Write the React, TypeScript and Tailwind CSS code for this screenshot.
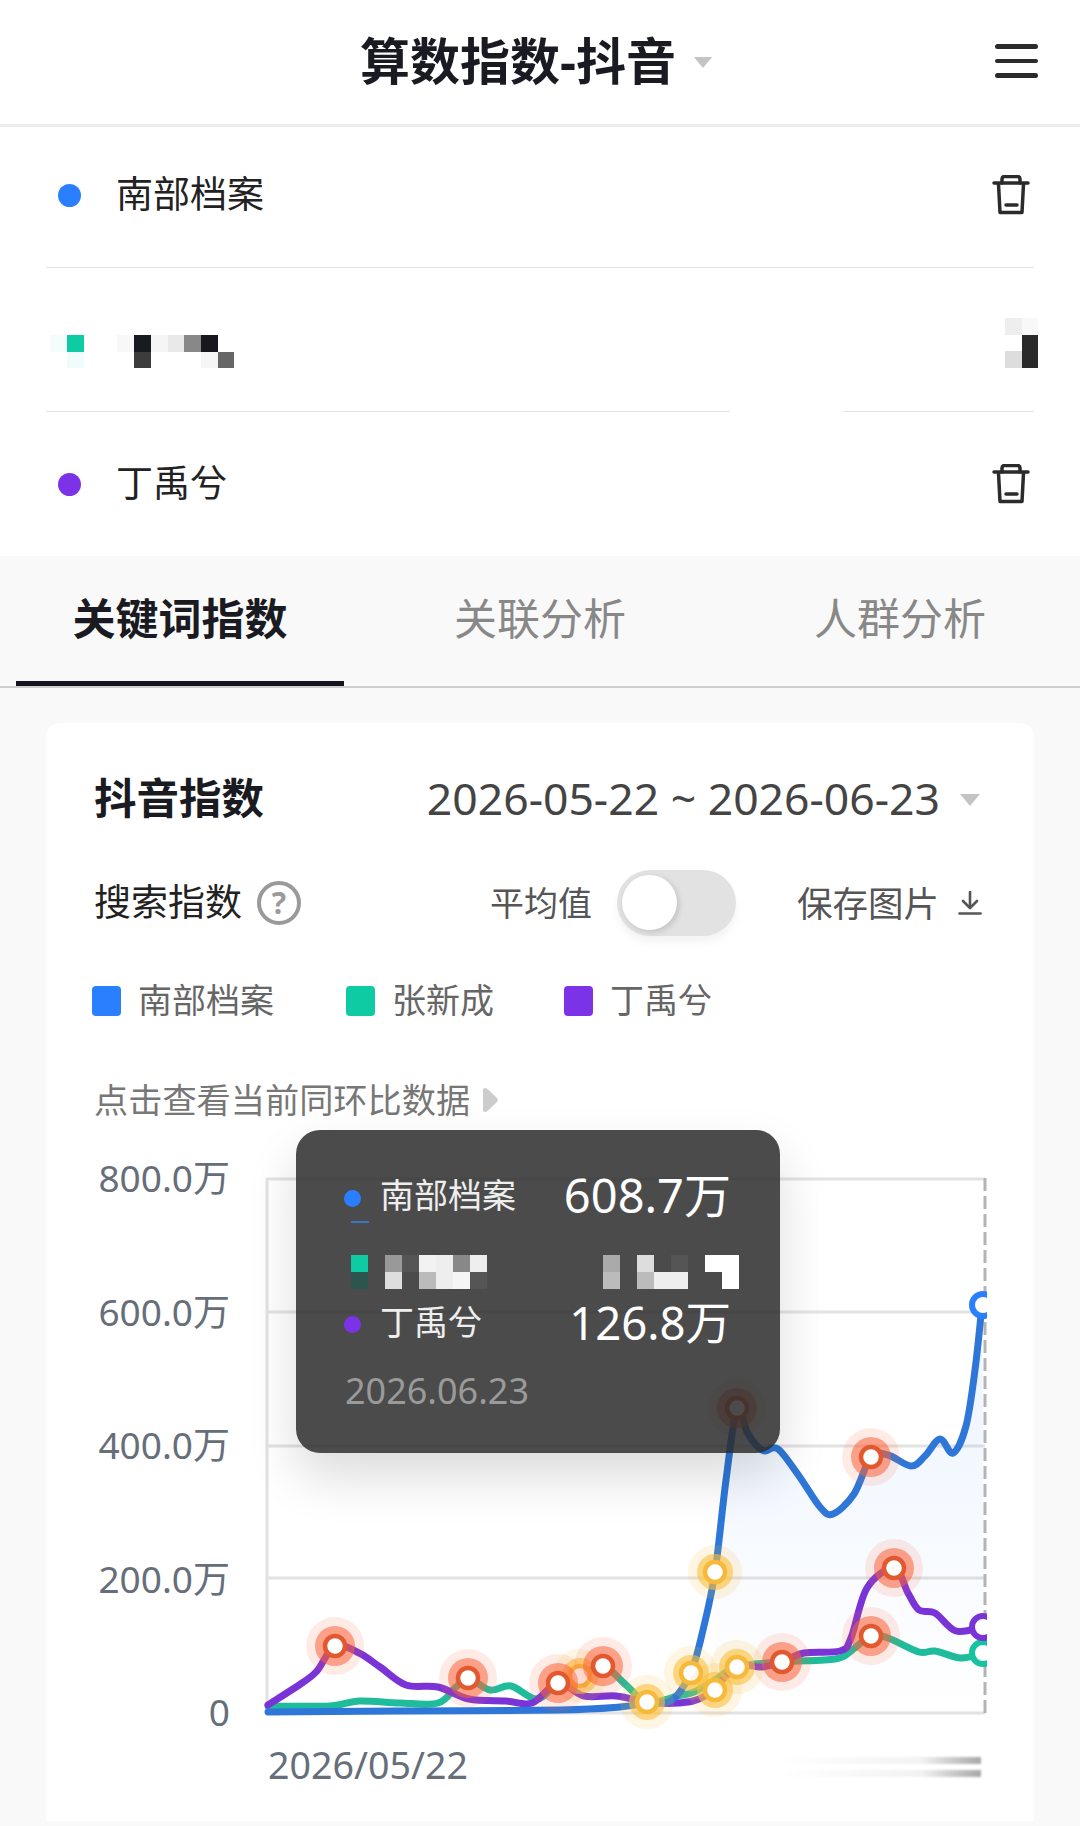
type Pt = [number, number];

const blue: Pt[] = [[268,1712],[400,1711],[560,1710],[620,1707],[647,1703],[672,1700],[691,1672],[703,1630],[715,1572],[726,1480],[737,1408],[747,1432],[757,1446],[765,1451],[778,1449],[799,1476],[820,1507],[833,1514],[854,1494],[871,1457],[888,1455],[911,1466],[925,1456],[940,1439],[953,1453],[966,1426],[975,1370],[982,1305]];
const teal: Pt[] = [[268,1706],[330,1706],[359,1701],[400,1703],[438,1703],[456,1687],[468,1678],[490,1690],[511,1686],[537,1699],[558,1683],[580,1676],[603,1666],[626,1685],[647,1702],[678,1696],[694,1692],[715,1680],[737,1667],[782,1662],[835,1659],[851,1651],[871,1636],[888,1638],[919,1652],[935,1651],[961,1658],[982,1653]];
const purple: Pt[] = [[268,1705],[302,1683],[317,1671],[335,1646],[359,1653],[380,1667],[406,1685],[438,1687],[469,1699],[506,1701],[532,1703],[558,1683],[584,1696],[616,1696],[647,1702],[678,1703],[705,1696],[737,1667],[762,1667],[782,1662],[804,1653],[840,1651],[851,1638],[867,1588],[894,1568],[908,1593],[919,1610],[935,1613],[956,1631],[982,1627]];

const orangeDots: Pt[] = [[335,1646],[468,1678],[558,1683],[603,1666],[782,1662],[871,1636],[894,1568],[871,1457],[737,1408]];
const yellowDots: Pt[] = [[580,1676],[647,1702],[691,1673],[715,1690],[737,1667],[715,1572]];

// catmull-rom through the points so the lines stay smooth
const smooth = (pts: Pt[]) => {
  let d = `M${pts[0][0]} ${pts[0][1]}`;
  for (let i = 0; i < pts.length - 1; i++) {
    const p0 = pts[i - 1] || pts[i];
    const p1 = pts[i];
    const p2 = pts[i + 1];
    const p3 = pts[i + 2] || p2;
    const c1x = p1[0] + (p2[0] - p0[0]) / 6;
    const c1y = p1[1] + (p2[1] - p0[1]) / 6;
    const c2x = p2[0] - (p3[0] - p1[0]) / 6;
    const c2y = p2[1] - (p3[1] - p1[1]) / 6;
    d += ` C${c1x} ${c1y} ${c2x} ${c2y} ${p2[0]} ${p2[1]}`;
  }
  return d;
};

const Caret = ({ className }: { className: string }) => (
  <svg viewBox="0 0 20 12" className={className}>
    <path d="M0 0H20L10 12Z" fill="#c4c4c4" />
  </svg>
);

const Trash = () => (
  <svg viewBox="0 0 38 40" className="w-[38px] h-[40px]" fill="none" stroke="#2b2b2b" strokeWidth="3.5" strokeLinecap="round" strokeLinejoin="round">
    <path d="M2 8H36" />
    <path d="M10 8V4C10 2.5 11 1.5 12.5 1.5H25.5C27 1.5 28 2.5 28 4V8" />
    <path d="M6.5 9L8 37.5H30L31.5 9" />
    <path d="M14 30H25" />
  </svg>
);

const Dot = ({ className }: { className: string }) => <span className={`block w-[23px] h-[23px] rounded-full ${className}`} />;

const Swatch = ({ color, label, className }: { color: string; label: string; className: string }) => (
  <div className={`flex items-center gap-[17px] ${className}`}>
    <span className={`block w-[29px] h-[30px] rounded-[4px] ${color}`} />
    <span className="text-[34px] leading-[40px] mb-[2px] text-[#666]">{label}</span>
  </div>
);

const Mosaic = ({ cells, size, className }: { cells: [number, number, string][]; size: number; className: string }) => (
  <svg className={className} shapeRendering="crispEdges">
    {cells.map(([c, r, fill], i) => (
      <rect key={i} x={c * size} y={r * size} width={size} height={size} fill={fill} />
    ))}
  </svg>
);

const Marker = ({ x, y, tone }: { x: number; y: number; tone: "orange" | "yellow" }) => {
  const orange = tone === "orange";
  return (
    <g>
      <circle cx={x} cy={y} r={orange ? 29 : 27} fill={orange ? "#f9633a" : "#fbbf3c"} fillOpacity={orange ? 0.13 : 0.15} />
      <circle cx={x} cy={y} r={orange ? 20 : 18} fill={orange ? "#f9633a" : "#fbbf3c"} fillOpacity={orange ? 0.55 : 0.6} />
      <circle cx={x} cy={y} r="10" fill="#fff" stroke={orange ? "#e2592f" : "#f6b93b"} strokeWidth="4.5" />
    </g>
  );
};

const Chart = () => (
  <svg viewBox="260 1150 730 590" className="w-[730px] h-[590px]" fill="none">
    <defs>
      <linearGradient id="area" x1="0" y1="0" x2="0" y2="1">
        <stop offset="0" stopColor="#2a7fff" stopOpacity="0.09" />
        <stop offset="1" stopColor="#2a7fff" stopOpacity="0" />
      </linearGradient>
      <clipPath id="plot">
        <rect x="260" y="1150" width="727" height="590" />
      </clipPath>
    </defs>
    {[1179, 1312, 1446, 1578, 1713].map((y) => (
      <path key={y} d={`M267 ${y}H985`} stroke="#e2e2e2" strokeWidth="3" />
    ))}
    <path d="M267 1178V1714" stroke="#e2e2e2" strokeWidth="3" />
    <path d="M985 1178V1714" stroke="#b4b4b4" strokeWidth="3" strokeDasharray="13 5" />
    <path d={`${smooth(blue.slice(8))} L985 1713 L715 1713 Z`} fill="url(#area)" />
    <g clipPath="url(#plot)" strokeWidth="7" strokeLinecap="round" strokeLinejoin="round">
      <path d={smooth(teal)} stroke="#1fbc9c" />
      <path d={smooth(purple)} stroke="#7a33d6" />
      <path d={smooth(blue)} stroke="#2e77d8" />
      {yellowDots.slice(0, 1).map(([x, y]) => <Marker key={x} x={x} y={y} tone="yellow" />)}
      {orangeDots.map(([x, y]) => <Marker key={`${x}-${y}`} x={x} y={y} tone="orange" />)}
      {yellowDots.slice(1).map(([x, y]) => <Marker key={`${x}-${y}`} x={x} y={y} tone="yellow" />)}
      <circle cx="983" cy="1305" r="11" fill="#fff" stroke="#2a7fff" strokeWidth="6" />
      <circle cx="983" cy="1653" r="11" fill="#fff" stroke="#15c39f" strokeWidth="6" />
      <circle cx="983" cy="1627" r="11" fill="#fff" stroke="#7a33d6" strokeWidth="6" />
    </g>
  </svg>
);

export default function App() {
  return (
    <div className="w-[1080px] h-[1826px] overflow-hidden bg-[#f9f9f9] font-['Noto_Sans','Noto_Sans_CJK_SC',sans-serif]">
      <div className="bg-white">
        <header className="h-[127px] border-b-[3px] border-[#ececec] flex items-center pl-[360px] pr-[42px]">
          <h1 className="text-[50px] leading-[60px] mb-[2px] font-bold text-[#1a1a22] whitespace-nowrap">算数指数-抖音</h1>
          <Caret className="w-[20px] h-[11px] ml-[17px]" />
          <div className="ml-auto flex flex-col gap-[10px] mb-[2px]">
            <span className="block w-[43px] h-[4.5px] rounded-full bg-[#2b2b2b]" />
            <span className="block w-[43px] h-[4.5px] rounded-full bg-[#2b2b2b]" />
            <span className="block w-[43px] h-[4.5px] rounded-full bg-[#2b2b2b]" />
          </div>
        </header>
        <div className="h-[140px] pb-[4px] flex items-center pl-[58px] pr-[50px]">
          <Dot className="bg-[#2a7fff]" />
          <span className="ml-[35px] text-[37px] leading-[48px] mb-[2px] text-[#222]">南部档案</span>
          <div className="ml-auto"><Trash /></div>
        </div>
        <div className="mx-[46px] h-px bg-[#e4e4e4]" />
        <div className="h-[143px] pt-[50px] flex items-start pl-[50px] pr-[42px] justify-between">
          <Mosaic
            size={16.8}
            className="w-[184px] h-[50px]"
            cells={[
              [1, 1, "#0fcba4"],
              [0, 1, "#f4fdfb"],
              [1, 2, "#effcfb"],
              [5, 1, "#1a1a22"],
              [5, 2, "#3c3c3c"],
              [4, 1, "#f8f8f8"],
              [6, 1, "#f5f5f5"],
              [7, 1, "#e9e9e9"],
              [8, 1, "#888888"],
              [9, 1, "#17171d"],
              [10, 2, "#666666"],
              [9, 2, "#f6f6f6"],
            ]}
          />
          <Mosaic
            size={16.7}
            className="w-[33px] h-[50px]"
            cells={[
              [0, 0, "#eeeeee"],
              [1, 0, "#f8f8f8"],
              [1, 1, "#2a2a2a"],
              [0, 2, "#dddddd"],
              [1, 2, "#2a2a2a"],
            ]}
          />
        </div>
        <div className="mx-[46px] h-px flex">
          <span className="block w-[684px] bg-[#e4e4e4]" />
          <span className="block w-[113px]" />
          <span className="block flex-1 bg-[#e4e4e4]" />
        </div>
        <div className="h-[144px] flex items-center pl-[58px] pr-[50px]">
          <Dot className="bg-[#7c33e8]" />
          <span className="ml-[35px] text-[37px] leading-[48px] mb-[2px] text-[#222]">丁禹兮</span>
          <div className="ml-auto"><Trash /></div>
        </div>
      </div>

      <nav className="h-[132px] border-b-2 border-[#cfcfcf] flex pl-4 pr-4 items-start">
        <div className="w-[328px] h-[130px] border-b-[5px] border-[#14141e] flex justify-center pt-[35px]">
          <span className="text-[43px] leading-[56px] font-bold text-[#1a1a22]">关键词指数</span>
        </div>
        <div className="w-[392px] flex justify-center pt-[35px]">
          <span className="text-[43px] leading-[56px] text-[#888]">关联分析</span>
        </div>
        <div className="w-[328px] flex justify-center pt-[35px]">
          <span className="text-[43px] leading-[56px] text-[#888]">人群分析</span>
        </div>
      </nav>

      <section className="relative mx-[46px] mt-[35px] h-[1098px] bg-white rounded-t-[14px] pt-[50px] pl-12 pr-[54px]">
        <div className="h-[50px] flex items-center justify-between">
          <h2 className="text-[42.5px] leading-[50px] font-bold text-[#1a1a22]">抖音指数</h2>
          <div className="flex items-center gap-[20px]">
            <span className="text-[44.5px] leading-[50px] text-[#444]">2026-05-22 ~ 2026-06-23</span>
            <Caret className="w-[20px] h-[12px] mt-[3px]" />
          </div>
        </div>

        <div className="mt-[47px] h-[66px] flex items-center whitespace-nowrap">
          <span className="shrink-0 text-[37px] leading-[48px] mb-[3px] text-[#222]">搜索指数</span>
          <span className="shrink-0 ml-[15px] w-[44px] h-[44px] rounded-full border-[4px] border-[#9a9a9a] flex items-center justify-center text-[30px] font-bold leading-none text-[#9a9a9a]">?</span>
          <span className="shrink-0 ml-[189px] text-[34px] leading-[48px] text-[#555]">平均值</span>
          <div className="shrink-0 ml-[25px] w-[119px] h-[66px] rounded-full bg-[#e2e2e2] p-[5px] shadow-[0_6px_10px_rgba(0,0,0,0.05)]">
            <span className="block w-[55px] h-[55px] rounded-full bg-white shadow-[2px_2px_6px_rgba(0,0,0,0.15)]" />
          </div>
          <span className="shrink-0 ml-[61px] text-[35.5px] leading-[48px] text-[#555]">保存图片</span>
          <svg viewBox="0 0 24 24" className="ml-[19px] w-[24px] h-[24px] shrink-0" fill="none" stroke="#555" strokeWidth="2.6" strokeLinecap="round" strokeLinejoin="round">
            <path d="M12 1V16" />
            <path d="M5 10L12 17L19 10" />
            <path d="M1.5 22.5H22.5" />
          </svg>
        </div>

        <div className="mt-[50px] h-[30px] -ml-[2px] flex items-center">
          <Swatch color="bg-[#2a7fff]" label="南部档案" className="w-[254px]" />
          <Swatch color="bg-[#0fcba4]" label="张新成" className="w-[218px]" />
          <Swatch color="bg-[#7c33e8]" label="丁禹兮" className="" />
        </div>

        <div className="mt-[64px] h-[40px] flex items-center">
          <span className="text-[34.2px] leading-[40px] text-[#777]">点击查看当前同环比数据</span>
          <svg viewBox="0 0 15 26" className="ml-[13px] w-[15px] h-[26px]">
            <path d="M2 1C0.8 1 0 2 0 3V23C0 24 0.8 25 2 25C3 25 4 24.5 5 23.5L14 15C15 14 15 12 14 11L5 2.5C4 1.5 3 1 2 1Z" fill="#cccccc" />
          </svg>
        </div>

        <div className="mt-[30px] -ml-[94px] flex">
          <div className="w-[230px] shrink-0 mt-[8px] h-[574px] flex flex-col justify-between items-end text-[37px] leading-[40px] text-[#666e7a]">
            <span>800.0万</span>
            <span>600.0万</span>
            <span>400.0万</span>
            <span>200.0万</span>
            <span>0</span>
          </div>
          <div className="ml-[30px] w-[730px] shrink-0">
            <Chart />
            <div className="mt-[5px] h-[40px] flex items-center justify-between pl-[8px] pr-[9px]">
              <span className="text-[37.6px] leading-[40px] text-[#666e7a]">2026/05/22</span>
              <div className="w-[198px] mt-[4px] flex flex-col gap-[6px] blur-[1px]">
                <span className="block h-[7px] bg-gradient-to-r from-white via-[#f2f2f2] via-70% to-[#a8a8a8]" />
                <span className="block h-[7px] bg-gradient-to-r from-white via-[#f2f2f2] via-70% to-[#a8a8a8]" />
              </div>
            </div>
          </div>
        </div>

        <div className="absolute left-[250px] top-[407px] w-[484px] h-[323px] rounded-[24px] bg-[#2b2b2b]/85 shadow-[0_24px_50px_rgba(0,0,0,0.14)] text-white">
          <div className="absolute left-[48px] right-[49px] top-[40px] h-[50px] flex items-center">
            <span className="block w-[17px] h-[17px] mt-[6px] rounded-full bg-[#2a7fff]" />
            <span className="ml-[19px] text-[34px] leading-[50px] text-[#eee]">南部档案</span>
            <span className="ml-auto text-[47px] leading-[50px]">608.7万</span>
          </div>
          <span className="absolute left-[55px] top-[91px] block w-[18px] h-[2px] bg-[#3f74c4]" />
          <Mosaic
            size={17}
            className="absolute left-[55px] top-[125px] w-[390px] h-[34px]"
            cells={[
              [0, 0, "#0fcba4"],
              [0, 1, "#2c5550"],
              [2, 0, "#999999"],
              [3, 0, "#555555"],
              [4, 0, "#f2f2f2"],
              [5, 0, "#eeeeee"],
              [6, 0, "#888888"],
              [7, 0, "#eeeeee"],
              [2, 1, "#dddddd"],
              [4, 1, "#bbbbbb"],
              [5, 1, "#eeeeee"],
              [6, 1, "#f5f5f5"],
              [7, 1, "#555555"],
              [14.8, 0, "#aaaaaa"],
              [14.8, 1, "#bbbbbb"],
              [16.8, 0, "#dddddd"],
              [16.8, 1, "#bbbbbb"],
              [17.8, 1, "#eeeeee"],
              [18.8, 0, "#555555"],
              [18.8, 1, "#eeeeee"],
              [20.8, 0, "#ffffff"],
              [21.8, 0, "#ffffff"],
              [21.8, 1, "#ffffff"],
            ]}
          />
          <div className="absolute left-[48px] right-[49px] top-[167px] h-[50px] flex items-center">
            <span className="block w-[17px] h-[17px] mt-[4px] rounded-full bg-[#7c33e8]" />
            <span className="ml-[19px] text-[34px] leading-[50px] text-[#eee]">丁禹兮</span>
            <span className="ml-auto text-[45.5px] leading-[50px]">126.8万</span>
          </div>
          <div className="absolute left-[49px] top-[241px] text-[36px] leading-[40px] text-[#9a9a9a]">2026.06.23</div>
        </div>
      </section>
    </div>
  );
}
